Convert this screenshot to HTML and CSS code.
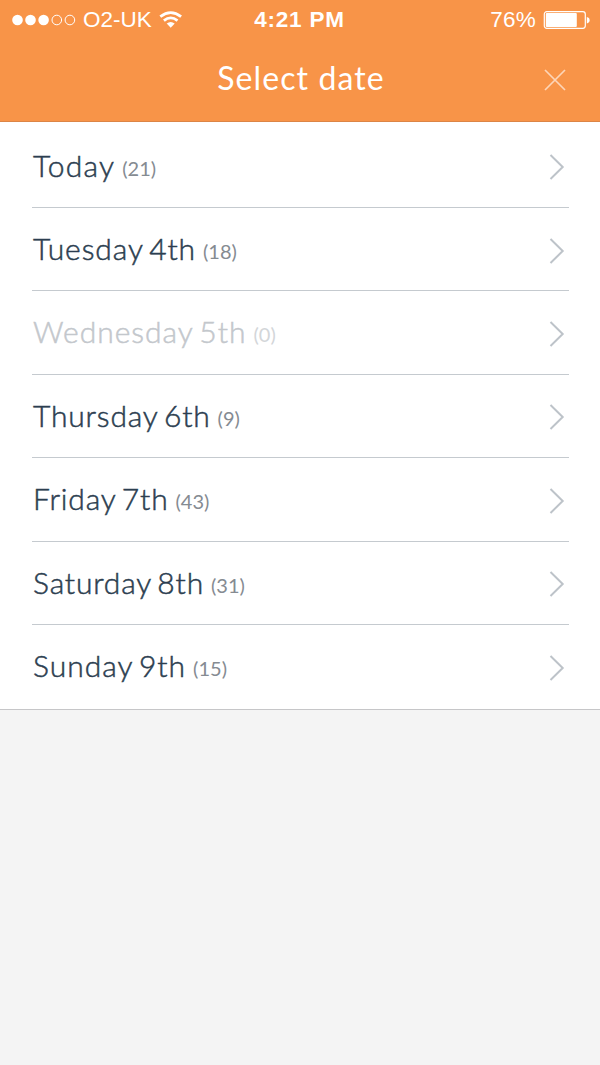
FILE: index.html
```html
<!DOCTYPE html>
<html lang="en">

<head>
	<title>Select date</title>
	<meta charset="UTF-8">
	<meta name="viewport" content="width=device-width,initial-scale=1">
	<link rel="stylesheet" href="styles.css">
</head>

<body>

	<div class="header">
		<div class="status">
			<div class="carrier">
				<svg class="signal" width="64" height="12" viewBox="0 0 64 12">
					<circle cx="5.5" cy="6" r="5.3" />
					<circle cx="18.5" cy="6" r="5.3" />
					<circle cx="31.6" cy="6" r="5.3" />
					<circle class="off" cx="44.8" cy="6" r="4.8" />
					<circle class="off" cx="57.9" cy="6" r="4.8" />
				</svg>
				<span class="network">O2-UK</span>
				<svg class="wifi" width="24" height="18" viewBox="0 0 24 18">
					<path class="arc" d="M1.3 5.7 Q11.7 -2.4 22.1 5.7" />
					<path class="arc" d="M4.9 9.6 Q11.7 4.1 18.5 9.6" />
					<path d="M7.7 12.6 Q11.7 9.6 15.7 12.6 L11.7 16.8 Z" />
				</svg>
			</div>
			<div class="clock">4:21 PM</div>
			<div class="power">
				<span class="percent">76%</span>
				<svg class="battery" width="47" height="18" viewBox="0 0 47 18">
					<rect class="case" x="1.3" y="0.7" width="41" height="16.6" rx="2.5" />
					<rect x="2.8" y="2" width="31" height="14" rx="1" />
					<path d="M43.8 6 Q46.6 6.6 46.6 9.2 Q46.6 11.8 43.8 12.4 Z" />
				</svg>
			</div>
		</div>
		<div class="title">
			<h1>Select date</h1>
			<svg class="close" width="22" height="22" viewBox="0 0 22 22"><path d="M1 1 L21 21 M21 1 L1 21" /></svg>
		</div>
	</div>

	<ul class="dates">
		<li class="today"><span class="day">Today</span><span class="count">(21)</span><svg class="arrow" width="16" height="26" viewBox="0 0 16 26"><path d="M1.5 1 L13.7 13 L1.5 25" /></svg></li>
		<li class="tue"><span class="day">Tuesday 4th</span><span class="count">(18)</span><svg class="arrow" width="16" height="26" viewBox="0 0 16 26"><path d="M1.5 1 L13.7 13 L1.5 25" /></svg></li>
		<li class="wed empty"><span class="day">Wednesday 5th</span><span class="count">(0)</span><svg class="arrow" width="16" height="26" viewBox="0 0 16 26"><path d="M1.5 1 L13.7 13 L1.5 25" /></svg></li>
		<li class="thu"><span class="day">Thursday 6th</span><span class="count">(9)</span><svg class="arrow" width="16" height="26" viewBox="0 0 16 26"><path d="M1.5 1 L13.7 13 L1.5 25" /></svg></li>
		<li class="fri"><span class="day">Friday 7th</span><span class="count">(43)</span><svg class="arrow" width="16" height="26" viewBox="0 0 16 26"><path d="M1.5 1 L13.7 13 L1.5 25" /></svg></li>
		<li class="sat"><span class="day">Saturday 8th</span><span class="count">(31)</span><svg class="arrow" width="16" height="26" viewBox="0 0 16 26"><path d="M1.5 1 L13.7 13 L1.5 25" /></svg></li>
		<li class="sun"><span class="day">Sunday 9th</span><span class="count">(15)</span><svg class="arrow" width="16" height="26" viewBox="0 0 16 26"><path d="M1.5 1 L13.7 13 L1.5 25" /></svg></li>
	</ul>

</body>

</html>
```

FILE: styles.css
```css
* { box-sizing: border-box; }

body {
	margin: 0;
	background-color: #f4f4f4;
	color: #2c3e50;
	font-family: Lato, "Open Sans", sans-serif;
}

svg { display: block; flex: none; }

/* header */

.header {
	height: 122px;
	background-color: #f89448;
	border-bottom: 1px solid #dc8546;
	color: white;
}

.status {
	display: grid;
	grid-template-columns: 1fr auto 1fr;
	align-items: center;
	height: 38px;
	padding: 0 10px 0 12px;
	font-family: "Liberation Sans", Arial, sans-serif;
	font-size: 22.5px;
	line-height: 38px;
}

.status svg { fill: white; }

.carrier, .power {
	display: flex;
	align-items: center;
}

.power { justify-content: flex-end; }

.network { margin: 1px 7px 0 7px; }
.clock { font-weight: bold; margin: 1px 3px 0 0; letter-spacing: 0.8px; }
.percent { margin: 1px 7px 0 0; letter-spacing: 0.2px; }

.signal .off { fill: none; stroke: white; stroke-width: 1; }
.wifi .arc { fill: none; stroke: white; stroke-width: 2.8; }
.battery .case { fill: none; stroke: white; stroke-width: 1.2; }

.title {
	display: grid;
	grid-template-columns: 1fr auto 1fr;
	align-items: center;
	height: 83px;
	padding: 0 34px;
}

.title h1 {
	grid-column: 2;
	margin: -3px 0 0 2px;
	font-size: 32px;
	font-weight: normal;
	line-height: 40px;
	letter-spacing: 1.1px;
}

.close {
	justify-self: end;
	margin-top: 1px;
	fill: none;
	stroke: #fdd5b8;
	stroke-width: 1.7;
}

/* list of days */

.dates {
	list-style: none;
	margin: 0;
	padding: 2.5px 31px 0.5px 32px;
	background-color: white;
	border-bottom: 1px solid #c6c6c8;
}

.dates li {
	display: flex;
	align-items: flex-start;
	height: 83.42px;
	padding-left: 1px;
	border-bottom: 1px solid #c5cacf;
	line-height: 81px;
}

.dates li:last-child { border-bottom: none; }

.day {
	font-size: 30px;
	font-weight: 300;
	letter-spacing: 1px;
	word-spacing: -3px;
	-webkit-text-stroke: 0.5px currentColor;
}

.today .day { letter-spacing: 1.2px; }
.tue .day { letter-spacing: 0.9px; }
.thu .day, .fri .day, .sat .day { letter-spacing: 0.82px; }

.count { margin: 3px 0 0 7px; font-size: 20px; color: #858b92; }

.arrow {
	align-self: center;
	margin-left: auto;
	margin-right: 4px;
	margin-top: 3px;
	fill: none;
	stroke: #bdc3c9;
	stroke-width: 2;
}

.empty .day { color: #c3c7cc; }
.empty .count { color: #d3d6d9; }
```
